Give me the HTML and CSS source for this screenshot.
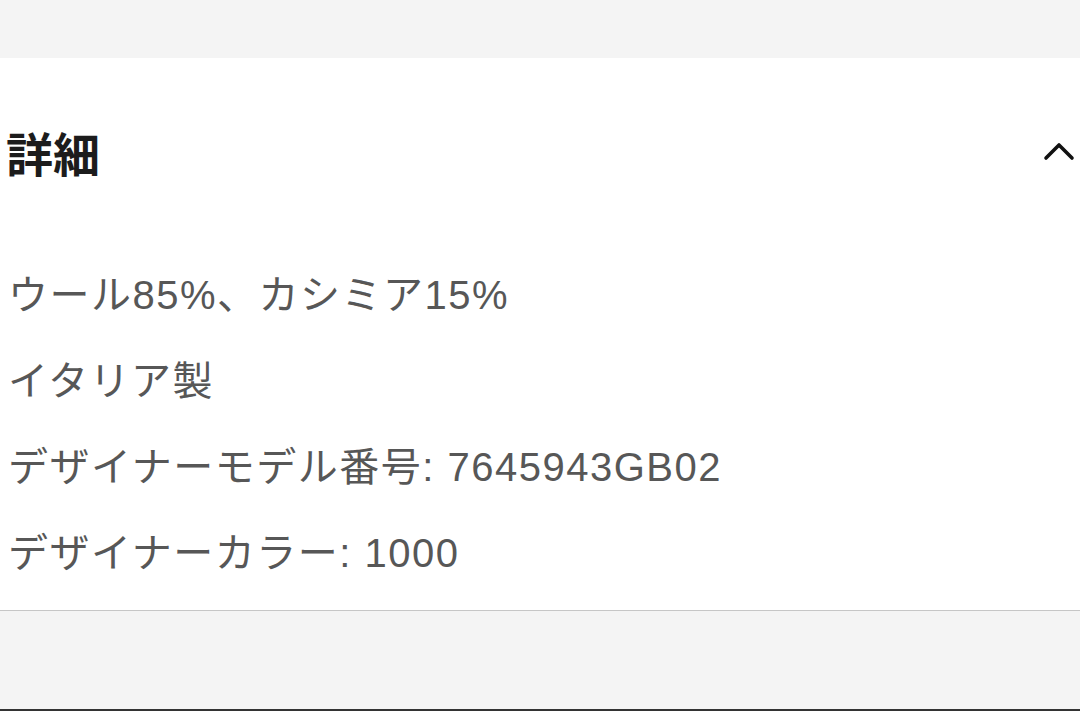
FILE: index.html
```html
<!DOCTYPE html>
<html lang="ja">
<head>
<meta charset="utf-8">
<link rel="stylesheet" href="styles.css">
</head>
<body>
<div class="page">
  <div class="top-band"></div>
  <section class="details">
    <div class="details-head">
      <h2 class="details-title">詳細</h2>
      <svg class="chevron" width="32" height="22" viewBox="0 0 32 22" aria-hidden="true">
        <path d="M3 18 L16 5 L29 18" fill="none" stroke="#111111" stroke-width="3.6" stroke-linecap="round" stroke-linejoin="round"/>
      </svg>
    </div>
    <ul class="details-list">
      <li>ウール85%、カシミア15%</li>
      <li>イタリア製</li>
      <li>デザイナーモデル番号: 7645943GB02</li>
      <li>デザイナーカラー: 1000</li>
    </ul>
  </section>
  <div class="bottom-band"></div>
</div>
</body>
</html>
```

FILE: styles.css
```css
html, body {
  margin: 0;
  padding: 0;
}
body {
  background: #f4f4f4;
  font-family: "Liberation Sans", "Noto Sans CJK JP", sans-serif;
  width: 1080px;
  height: 711px;
  overflow: hidden;
}
.page {
  display: flex;
  flex-direction: column;
  height: 711px;
}
.top-band {
  height: 58px;
  background: #f4f4f4;
  flex: none;
}
.details {
  background: #ffffff;
  border-bottom: 1px solid #c6c6c6;
  padding-bottom: 14px;
  flex: none;
}
.details-head {
  height: 194px;
  display: flex;
  align-items: center;
  justify-content: space-between;
  padding: 0 5px 8px 6px;
  box-sizing: border-box;
}
.details-title {
  margin: 0;
  font-family: "Noto Sans CJK JP", sans-serif;
  font-size: 47px;
  font-weight: 700;
  color: #1c1c1c;
  line-height: 1;
  letter-spacing: 0;
}
.chevron {
  display: block;
}
.details-list {
  list-style: none;
  margin: 0;
  padding: 0 0 0 8px;
}
.details-list li {
  height: 86px;
  line-height: 86px;
  font-size: 40px;
  letter-spacing: 1.5px;
  color: #575757;
  font-weight: 400;
  white-space: nowrap;
}
.bottom-band {
  flex: 1;
  background: #f4f4f4;
  border-bottom: 2px solid #333333;
}
```
